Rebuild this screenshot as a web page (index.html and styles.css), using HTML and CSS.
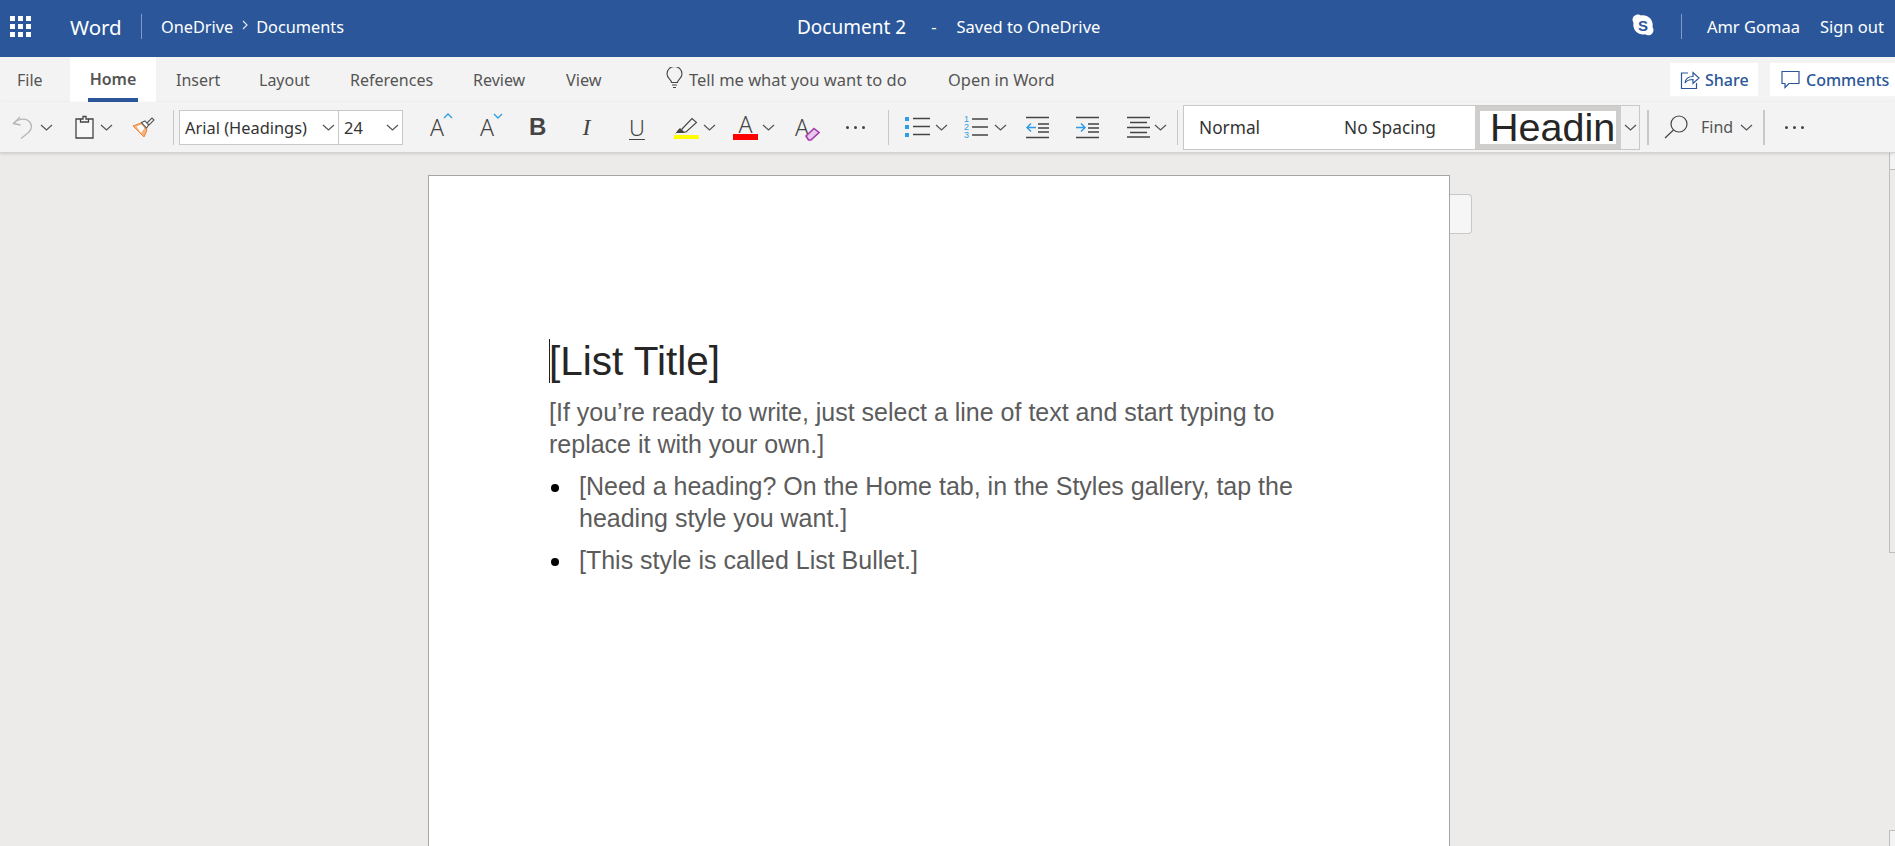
FILE: index.html
```html
<!DOCTYPE html>
<html lang="en">
<head>
<meta charset="utf-8">
<title>Document 2 - Word</title>
<link rel="stylesheet" href="styles.css">
</head>
<body>
<header class="appbar">
  <div class="appbar-left">
    <svg class="waffle" width="21" height="21" viewBox="0 0 21 21" fill="#fff"><rect x="0" y="0" width="5" height="5"/><rect x="8" y="0" width="5" height="5"/><rect x="16" y="0" width="5" height="5"/><rect x="0" y="8" width="5" height="5"/><rect x="8" y="8" width="5" height="5"/><rect x="16" y="8" width="5" height="5"/><rect x="0" y="16" width="5" height="5"/><rect x="8" y="16" width="5" height="5"/><rect x="16" y="16" width="5" height="5"/></svg>
    <span class="app-name">Word</span>
    <span class="app-sep"></span>
    <span class="crumb">OneDrive</span>
    <svg class="crumb-arrow" width="6" height="10" viewBox="0 0 6 10" fill="none" stroke="#dfe6f1" stroke-width="1.2"><path d="M1 1l4 4-4 4"/></svg>
    <span class="crumb">Documents</span>
  </div>
  <div class="appbar-center">
    <span class="doc-name">Document 2</span>
    <span class="doc-dash">-</span>
    <span class="doc-state">Saved to OneDrive</span>
  </div>
  <div class="appbar-right">
    <svg class="skype" width="24" height="24" viewBox="0 0 24 24"><path fill="#fff" d="M7 1.500c1.200 0 2.200.4 3 1 .7-.1 1.300-.2 2-.2 5.300 0 9.700 4.300 9.700 9.700 0 .7-.1 1.400-.2 2 .6.900 1 1.900 1 3 0 2.900-2.400 5.300-5.300 5.300-1.100 0-2.200-.4-3-1-.7.100-1.400.2-2.200.2C6.700 21.500 2.300 17.200 2.300 11.800c0-.7.100-1.400.2-2-.6-.9-1-1.900-1-3C1.500 3.900 4 1.500 7 1.500z"/><text x="12" y="17.500" text-anchor="middle" class="skype-s">S</text></svg>
    <span class="app-sep app-sep-right"></span>
    <span class="user">Amr Gomaa</span>
    <span class="user signout">Sign out</span>
  </div>
</header>

<nav class="tabs">
  <span class="tab tab-file">File</span>
  <span class="tab tab-home">Home</span>
  <span class="tab tab-insert">Insert</span>
  <span class="tab tab-layout">Layout</span>
  <span class="tab tab-refs">References</span>
  <span class="tab tab-review">Review</span>
  <span class="tab tab-view">View</span>
  <svg class="bulb" width="17" height="22" viewBox="0 0 17 22" fill="none" stroke="#444" stroke-width="1.1"><path d="M5.500 15.500c0-3-4.500-4-4.500-8.500a7.500 7.500 0 0 1 15 0c0 4.500-4.500 5.500-4.500 8.500z"/><path d="M6 18h5M7 20.500h3"/></svg>
  <span class="tab tab-tell">Tell me what you want to do</span>
  <span class="tab tab-open">Open in Word</span>
  <span class="tab-actions">
    <span class="pill pill-share">
      <svg width="20" height="20" viewBox="0 0 20 20" fill="none" stroke="#2b579a" stroke-width="1.200"><path d="M8 3H1.500v15.500h15V13"/><path d="M5 13c.5-4 3.500-6.500 8-6.500V2.500l6 5.500-6 5.500V9.500c-3.500 0-6.500 1-8 3.500z"/></svg>
      Share
    </span>
    <span class="pill pill-comments">
      <svg width="19" height="19" viewBox="0 0 19 19" fill="none" stroke="#2b579a" stroke-width="1.200"><path d="M1 1.500h17v12H8l-4 4v-4H1z"/></svg>
      Comments
    </span>
  </span>
</nav>

<div class="toolbar">
  <svg class="i i-undo" width="21" height="23" viewBox="0 0 21 23" fill="none" stroke="#b5b5b5" stroke-width="1.300"><path d="M8 1L1.500 7.500 8.500 9"/><path d="M1.500 7.500C5 3 12 2 16 4.500c4.500 3 4.500 8.500.5 12L9 22.500"/></svg>
  <svg class="chev c-undo" width="13" height="7" viewBox="0 0 13 7"><path d="M1 1l5.500 5L12 1"/></svg>
  <svg class="i i-paste" width="19" height="24" viewBox="0 0 19 24" fill="#f8f8f8" stroke="#444" stroke-width="1.300"><path d="M5.500 4H1v19h17V4h-4.500"/><path d="M5.500 7V4H8V1.500h3V4h2.500v3z"/></svg>
  <svg class="chev c-paste" width="13" height="7" viewBox="0 0 13 7"><path d="M1 1l5.500 5L12 1"/></svg>
  <svg class="i i-brush" width="23" height="21" viewBox="0 0 23 21"><path fill="#f8b27c" stroke="#e8833a" stroke-width="1" d="M1 9l8-3 6 7-3 7z"/><path fill="#fff" d="M4.500 9.500l5-2 3 3.500-3.500 5z"/><path fill="#fff" stroke="#555" stroke-width="1.100" d="M9.500 5.500l3.500-1.500 3.500 4-2 3zM15 6l5-5 2 2-5 5z"/></svg>
  <span class="vsep vsep-1"></span>
  <span class="font-box">
    <span class="font-name">Arial (Headings)<svg class="chev" width="13" height="7" viewBox="0 0 13 7"><path d="M1 1l5.500 5L12 1"/></svg></span>
    <span class="font-size">24<svg class="chev" width="13" height="7" viewBox="0 0 13 7"><path d="M1 1l5.500 5L12 1"/></svg></span>
  </span>
  <span class="glyph g-grow">A<svg class="caret-up" width="10" height="6" viewBox="0 0 10 6" fill="none" stroke="#2e9ee6" stroke-width="1.300"><path d="M1 5l4-4 4 4"/></svg></span>
  <span class="glyph g-shrink">A<svg class="caret-up" width="10" height="6" viewBox="0 0 10 6" fill="none" stroke="#2e9ee6" stroke-width="1.300"><path d="M1 1l4 4 4-4"/></svg></span>
  <span class="fmt fmt-b">B</span>
  <span class="fmt fmt-i">I</span>
  <span class="fmt fmt-u">U</span>
  <span class="hl">
    <svg width="25" height="19" viewBox="0 0 25 19" fill="none"><path d="M8 13L18 2.500l4.500 4L12 16H8z" stroke="#444" stroke-width="1.100"/><path d="M1 18l3-4 2-2 5 5H1z" fill="#444"/></svg>
    <span class="swatch swatch-yellow"></span>
  </span>
  <svg class="chev c-hl" width="13" height="7" viewBox="0 0 13 7"><path d="M1 1l5.500 5L12 1"/></svg>
  <span class="fontcolor">
    <span class="fontcolor-a">A</span>
    <span class="swatch swatch-red"></span>
  </span>
  <svg class="chev c-fc" width="13" height="7" viewBox="0 0 13 7"><path d="M1 1l5.500 5L12 1"/></svg>
  <span class="glyph g-clear">A<svg class="eraser" width="15" height="14" viewBox="0 0 15 14"><path d="M1 9l8-7.500 5 4-8 7.500H3.500z" fill="#e8c8ec" stroke="#a43cae" stroke-width="1.600"/></svg></span>
  <span class="dots d-1"><i></i><i></i><i></i></span>
  <span class="vsep vsep-2"></span>
  <svg class="i i-bullets" width="25" height="22" viewBox="0 0 25 22"><g fill="#2e9ee6"><rect x="0" y="1" width="4" height="4"/><rect x="0" y="9" width="4" height="4"/><rect x="0" y="17" width="4" height="4"/></g><path stroke="#444" stroke-width="1.300" d="M8 2.500h17M8 10.500h17M8 18.500h17"/></svg>
  <svg class="chev c-bul" width="13" height="7" viewBox="0 0 13 7"><path d="M1 1l5.500 5L12 1"/></svg>
  <svg class="i i-num" width="24" height="24" viewBox="0 0 24 24"><g class="num-digits"><text x="0" y="7">1</text><text x="0" y="15">2</text><text x="0" y="23">3</text></g><path stroke="#444" stroke-width="1.300" d="M8 4h16M8 12h16M8 20h16"/></svg>
  <svg class="chev c-num" width="13" height="7" viewBox="0 0 13 7"><path d="M1 1l5.500 5L12 1"/></svg>
  <svg class="i i-out" width="23" height="23" viewBox="0 0 23 23" fill="none"><path stroke="#444" stroke-width="1.300" d="M0 1.500h23M12 8h11M12 12h11M12 16h11M0 21.500h23"/><path stroke="#2e9ee6" stroke-width="1.500" d="M10 11.500H1M5 7.500l-4 4 4 4"/></svg>
  <svg class="i i-in" width="23" height="23" viewBox="0 0 23 23" fill="none"><path stroke="#444" stroke-width="1.300" d="M0 1.500h23M12 8h11M12 12h11M12 16h11M0 21.500h23"/><path stroke="#2e9ee6" stroke-width="1.500" d="M0 11.500h9M5 7.500l4 4-4 4"/></svg>
  <svg class="i i-align" width="23" height="22" viewBox="0 0 23 22" fill="none" stroke="#444" stroke-width="1.300"><path d="M0 1.500h23M3 6.500h17M0 11.500h23M3 16.500h17M0 21h23"/></svg>
  <svg class="chev c-align" width="13" height="7" viewBox="0 0 13 7"><path d="M1 1l5.500 5L12 1"/></svg>
  <span class="vsep vsep-3"></span>
  <span class="styles">
    <span class="style style-normal">Normal</span>
    <span class="style style-nospace">No Spacing</span>
    <span class="style-heading"><span class="style-heading-inner">Headin</span></span>
    <span class="style-more"><svg class="chev" width="13" height="7" viewBox="0 0 13 7"><path d="M1 1l5.500 5L12 1"/></svg></span>
  </span>
  <span class="vsep vsep-4"></span>
  <svg class="i i-find" width="24" height="24" viewBox="0 0 24 24" fill="none" stroke="#444" stroke-width="1.200"><circle cx="15" cy="9" r="8"/><path d="M9.500 15L1 23"/></svg>
  <span class="find">Find</span>
  <svg class="chev c-find" width="13" height="7" viewBox="0 0 13 7"><path d="M1 1l5.500 5L12 1"/></svg>
  <span class="vsep vsep-5"></span>
  <span class="dots d-2"><i></i><i></i><i></i></span>
</div>

<main class="canvas">
  <div class="sheet-row">
    <article class="sheet">
      <h1 class="doc-title"><span class="cursor"></span>[List Title]</h1>
      <p class="doc-body">[If you’re ready to write, just select a line of text and start typing to replace it with your own.]</p>
      <ul class="doc-list">
        <li>[Need a heading? On the Home tab, in the Styles gallery, tap the heading style you want.]</li>
        <li>[This style is called List Bullet.]</li>
      </ul>
    </article>
    <div class="side-tab"></div>
  </div>
  <aside class="scrollbar">
    <span class="sb-btn"></span>
    <span class="sb-thumb"></span>
    <span class="sb-btn sb-btn-end"></span>
  </aside>
</main>
</body>
</html>
```
FILE: styles.css
```css
* { box-sizing: border-box; }
html, body { margin: 0; height: 100%; }
body {
  width: 1895px;
  height: 846px;
  overflow: hidden;
  background: #ecebe9;
  font-family: "Noto Sans", "Open Sans", sans-serif;
  color: #444;
  display: flex;
  flex-direction: column;
}

/* App bar */
.appbar {
  height: 57px;
  flex: none;
  background: #2b579a;
  color: #fff;
  display: flex;
  align-items: center;
  padding-bottom: 4px;
  position: relative;
}
.appbar-left { display: flex; align-items: center; padding-left: 10px; }
.app-name { margin-left: 39px; font-size: 20.5px; width: 50px; }
.app-sep { width: 1px; height: 25px; background: #7f9cc6; margin: 0 19px 0 21px; }
.crumb { font-size: 16.3px; }
.crumb-arrow { margin: -4px 8px 0 9px; }
.appbar-center {
  position: absolute;
  left: 797px;
  top: 0;
  height: 53px;
  display: flex;
  align-items: center;
  white-space: nowrap;
}
.doc-name { font-size: 19px; }
.doc-dash { font-size: 16.5px; margin-left: 25px; }
.doc-state { font-size: 16.5px; margin-left: 20px; }
.appbar-right { margin-left: auto; display: flex; align-items: center; padding-right: 11px; }
.skype { margin-top: -3px; }
.skype-s { font: bold 15px "Liberation Sans", sans-serif; fill: #2b579a; }
.app-sep-right { margin: 0 25px 0 26px; }
.user { font-size: 16.5px; }
.signout { margin-left: 20px; }

/* Tabs */
.tabs {
  height: 45px;
  flex: none;
  background: #f3f3f3;
  display: flex;
  align-items: center;
  font-size: 16px;
  color: #555;
  position: relative;
  white-space: nowrap;
}
.tab { display: block; }
.tab-file { margin-left: 17px; width: 53px; }
.tab-home {
  width: 86px;
  align-self: stretch;
  background: #fff;
  font-weight: 600;
  text-align: center;
  line-height: 45px;
  position: relative;
}
.tab-home::after {
  content: "";
  position: absolute;
  left: 18px;
  bottom: 0;
  width: 50px;
  height: 4px;
  background: #2b579a;
}
.tab-insert { margin-left: 20px; width: 83px; }
.tab-layout { width: 91px; }
.tab-refs { width: 123px; }
.tab-review { width: 93px; }
.tab-view { width: 100px; font-size: 16.3px; }
.bulb { margin-top: -3px; }
.tab-tell { margin-left: 6px; width: 259px; margin-top: -1px; font-size: 16.5px; }
.tab-open { font-size: 16.4px; }
.tab-actions { margin-left: auto; display: flex; gap: 12px; align-self: flex-start; margin-top: 6px; }
.pill {
  height: 33px;
  background: #fff;
  color: #2b579a;
  font-weight: 500;
  display: flex;
  align-items: center;
  gap: 5px;
}
.pill-share { width: 88px; padding-left: 10px; }
.pill-comments { width: 125px; padding-left: 11px; gap: 6px; }

/* Toolbar */
.toolbar {
  height: 51px;
  flex: none;
  background: #f3f3f3;
  border-bottom: 1px solid #d2d2d2;
  box-shadow: 0 1px 3px rgba(0,0,0,.12);
  display: flex;
  align-items: center;
  position: relative;
  z-index: 2;
  white-space: nowrap;
}
.chev { fill: none; stroke: #555; stroke-width: 1.2; flex: none; }
.i { flex: none; }
.i-undo { margin-left: 12px; }
.c-undo { margin-left: 7px; }
.i-paste { margin-left: 22px; }
.c-paste { margin-left: 6px; }
.i-brush { margin-left: 19px; }
.vsep { width: 1px; height: 35px; background: #c8c8c8; flex: none; }
.vsep-1 { margin-left: 18px; }
.font-box {
  margin-left: 5px;
  height: 35px;
  width: 224px;
  display: flex;
  background: #fff;
  border: 1px solid #c8c8c8;
  font-size: 16.4px;
  color: #333;
  align-items: center;
}
.font-name {
  width: 159px;
  height: 100%;
  border-right: 1px solid #c8c8c8;
  display: flex;
  align-items: center;
  justify-content: space-between;
  padding: 0 3px 0 5px;
}
.font-size {
  flex: 1;
  display: flex;
  align-items: center;
  justify-content: space-between;
  padding: 0 3px 0 5px;
}
.glyph {
  font-size: 23px;
  font-weight: 300;
  position: relative;
  display: block;
  color: #444;
  line-height: 24px;
  flex: none;
}
.g-grow { margin-left: 27px; width: 19px; }
.g-shrink { margin-left: 31px; width: 19px; }
.caret-up { position: absolute; left: 13px; top: -2px; }
.fmt { flex: none; font-size: 24px; width: 15px; text-align: center; color: #444; line-height: 24px; margin-top: -1px; }
.fmt-b { margin-left: 30px; font-weight: 700; font-family: "Liberation Sans", sans-serif; }
.fmt-i { margin-left: 35px; font-style: italic; font-family: "Liberation Serif", serif; }
.fmt-u { margin-left: 35px; font-size: 22px; text-decoration: underline; text-underline-offset: 3px; text-decoration-thickness: 1px; font-weight: 300; }
.hl { margin-left: 30px; width: 26px; display: flex; flex-direction: column; flex: none; }
.hl svg { display: block; }
.swatch { display: block; height: 4px; width: 25px; }
.swatch-yellow { background: #ffff00; }
.swatch-red { background: #ff0000; height: 6px; }
.c-hl { margin-left: 3px; }
.fontcolor { margin-left: 17px; width: 25px; display: flex; flex-direction: column; align-items: center; flex: none; }
.fontcolor-a { font-size: 23px; line-height: 20px; font-weight: 300; }
.c-fc { margin-left: 4px; }
.g-clear { margin-left: 20px; width: 23px; }
.eraser { position: absolute; left: 10px; top: 12px; }
.dots { display: flex; gap: 5px; flex: none; }
.dots i { width: 3px; height: 3px; border-radius: 50%; background: #444; display: block; }
.d-1 { margin-left: 28px; width: 23px; }
.vsep-2 { margin-left: 19px; }
.i-bullets { margin-left: 16px; }
.c-bul { margin-left: 5px; }
.i-num { margin-left: 16px; }
.num-digits { font: 9px "Liberation Sans", sans-serif; fill: #2e9ee6; }
.i-num path { fill: none; }
.c-num { margin-left: 6px; }
.i-out { margin-left: 19px; }
.i-in { margin-left: 27px; }
.i-align { margin-left: 28px; }
.c-align { margin-left: 4px; }
.vsep-3 { margin-left: 10px; }
.styles {
  margin-left: 5px;
  width: 457px;
  height: 45px;
  flex: none;
  display: flex;
  align-items: stretch;
  background: #fff;
  border: 1px solid #c8c8c8;
  font-size: 17.3px;
  color: #333;
}
.style { display: flex; align-items: center; }
.style-normal { padding-left: 15px; width: 160px; }
.style-nospace { width: 131px; }
.style-heading {
  width: 146px;
  background: #cfcecd;
  padding: 5px;
  display: flex;
}
.style-heading-inner {
  flex: 1;
  background: #fff;
  font: 39.5px/32px "Liberation Sans", sans-serif;
  color: #262626;
  padding-left: 10px;
}
.style-more {
  flex: 1;
  background: #f3f3f3;
  display: flex;
  align-items: center;
  justify-content: center;
}
.vsep-4 { margin-left: 7px; width: 2px; }
.i-find { margin-left: 15px; }
.find { margin-left: 13px; font-size: 16px; color: #555; }
.c-find { margin-left: 7px; }
.vsep-5 { margin-left: 10px; width: 2px; }
.d-2 { margin-left: 20px; }

/* Document canvas */
.canvas { flex: 1; min-height: 0; overflow: hidden; display: flex; }
.sheet-row { display: flex; align-items: flex-start; padding: 22px 0 0 428px; flex: 1; }
.sheet {
  width: 1022px;
  height: 800px;
  flex: none;
  background: #fff;
  border: 1px solid #a6a6a6;
  padding: 162px 120px 0 120px;
  font-family: "Liberation Sans", sans-serif;
}
.side-tab {
  width: 22px;
  height: 40px;
  margin-top: 19px;
  background: #f6f6f6;
  border: 1px solid #c8c8c8;
  border-left: none;
  border-radius: 0 4px 4px 0;
}
.scrollbar { width: 6px; flex: none; display: flex; flex-direction: column; }
.sb-btn { display: block; height: 16px; flex: none; background: #f3f3f3; border-left: 1px solid #bdbdbd; }
.sb-thumb {
  display: block;
  height: 384px;
  flex: none;
  background: #ecebe9;
  border: 1px solid #bdbdbd;
  border-right: none;
}
.sb-btn-end { margin-top: auto; border-top: 1px solid #bdbdbd; }
.doc-title {
  margin: 0;
  font-size: 40.5px;
  line-height: 46px;
  font-weight: 400;
  color: #262626;
  position: relative;
}
.cursor { position: absolute; left: 0; top: 1px; width: 1px; height: 44px; background: #222; }
.doc-body {
  margin: 12px 0 0;
  font-size: 25px;
  line-height: 32px;
  color: #5c5c5c;
}
.doc-list { margin: 10px 0 0; padding: 0 0 0 30px; font-size: 25px; line-height: 32px; color: #5c5c5c; list-style: none; }
.doc-list li { margin-bottom: 10px; position: relative; }
.doc-list li::before {
  content: "";
  position: absolute;
  left: -28px;
  top: 14px;
  width: 8px;
  height: 8px;
  border-radius: 50%;
  background: #000;
}
```
